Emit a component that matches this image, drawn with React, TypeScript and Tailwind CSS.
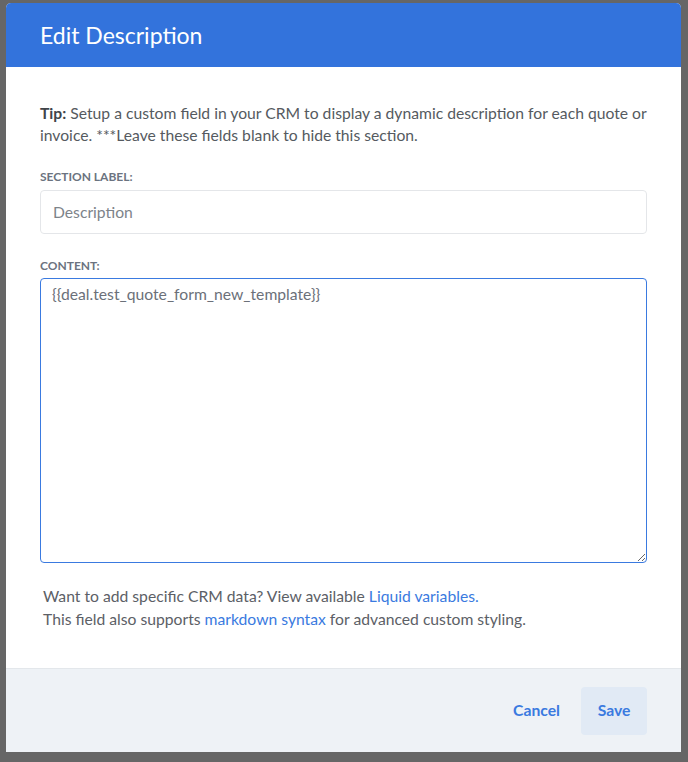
export default function App() {
  return (
    <div
      className="min-h-[762px] w-full bg-[#666666] pt-[3px]"
      style={{ fontFamily: 'Lato, "Open Sans", sans-serif' }}
    >
      <div className="ml-[6px] flex w-[675px] flex-col overflow-hidden rounded-t-[5px] bg-white">
        {/* Header */}
        <div className="flex h-[64px] items-center bg-[#3373dc] px-[34px]">
          <h2 className="text-[23px] font-normal text-white">Edit Description</h2>
        </div>

        {/* Body */}
        <div className="px-[34px] pb-[37px] pt-[35px]">
          <p className="text-[15.7px] leading-[22px] text-[#555a60]">
            <span className="font-bold text-[#3f4449]">Tip:</span> Setup a custom field in your CRM
            to display a dynamic description for each quote or invoice. ***Leave these fields blank
            to hide this section.
          </p>

          <label className="mt-[24px] block text-[12px] font-bold uppercase leading-[14px] text-[#6b7380]">
            Section Label:
          </label>
          <input
            placeholder="Description"
            className="mt-[6px] h-[44px] w-full rounded-[4px] border border-[#e4e6e9] px-[12px] text-[15.7px] text-[#555a60] placeholder:text-[#7d838a] focus:outline-none"
          />

          <label className="mt-[25px] block text-[12px] font-bold uppercase leading-[14px] text-[#6b7380]">
            Content:
          </label>
          <textarea
            defaultValue="{{deal.test_quote_form_new_template}}"
            className="mt-[5px] block h-[285px] w-full resize-y rounded-[4px] border border-[#3a7ae0] px-[11px] py-[4px] text-[15.7px] leading-[22px] text-[#6b7079] focus:outline-none"
          />

          <div className="mt-[22px] px-[3px] text-[15.7px] leading-[23px] text-[#5c6066]">
            <p>
              Want to add specific CRM data? View available{' '}
              <a className="text-[#3a7ae0]">Liquid variables.</a>
            </p>
            <p>
              This field also supports <a className="text-[#3a7ae0]">markdown syntax</a> for
              advanced custom styling.
            </p>
          </div>
        </div>

        {/* Footer */}
        <div className="flex h-[84px] items-center justify-end gap-[21px] border-t border-[#e3e7eb] bg-[#eef2f6] px-[34px]">
          <button className="text-[15.7px] font-bold text-[#3a7ae0]">Cancel</button>
          <button className="h-[48px] w-[66px] rounded-[4px] bg-[#e1eaf5] text-[15.7px] font-bold text-[#3a7ae0]">
            Save
          </button>
        </div>
      </div>
    </div>
  );
}
